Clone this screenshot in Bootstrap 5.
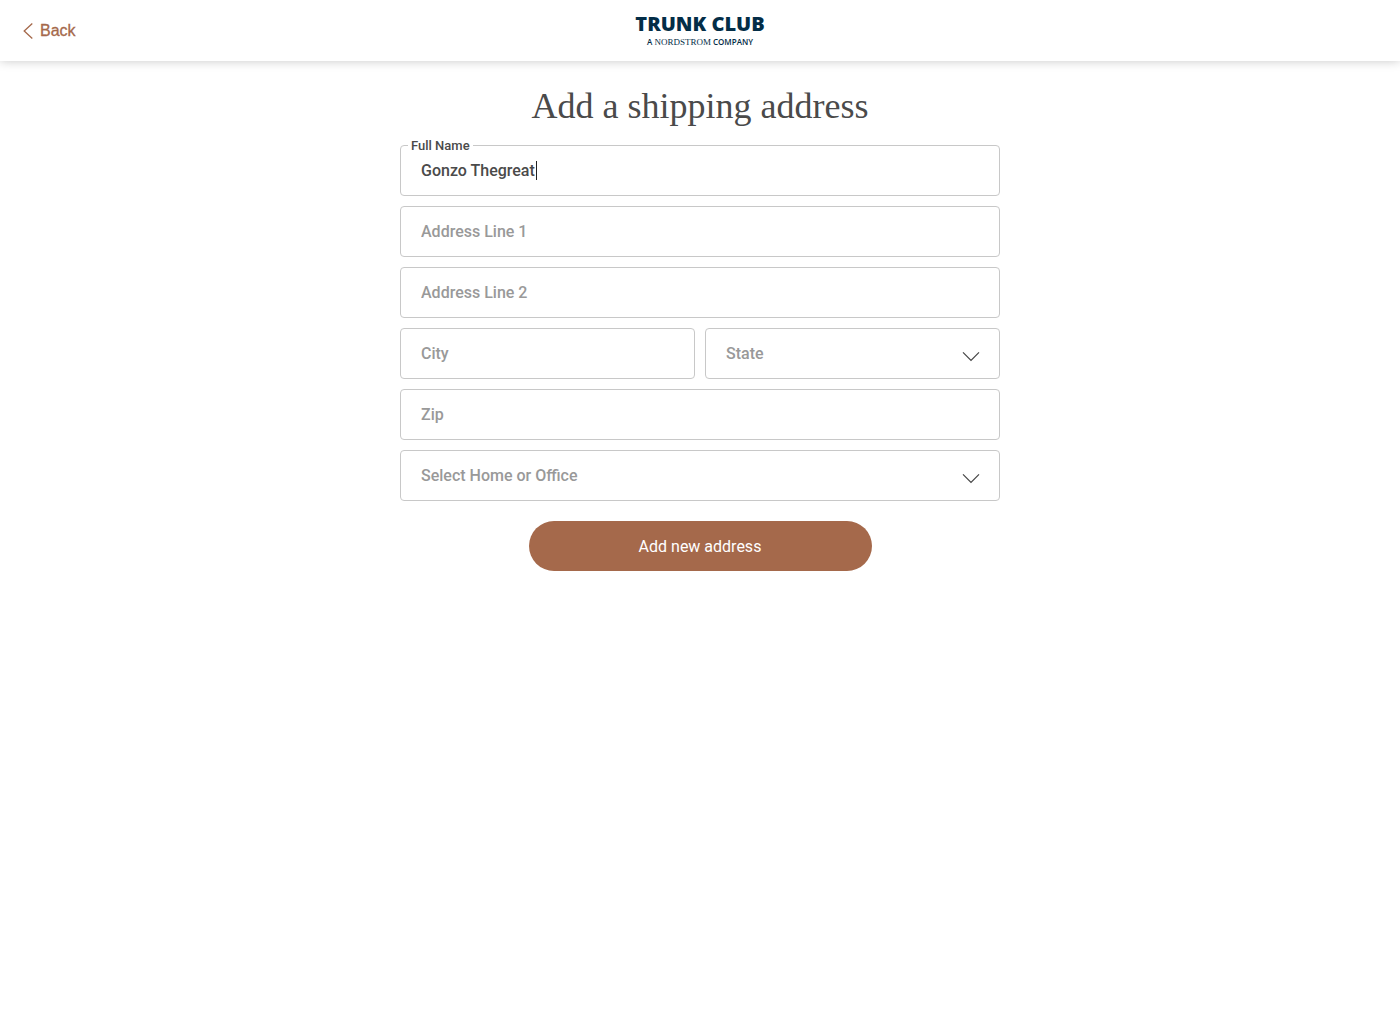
<!DOCTYPE html>
<html lang="en">
<head>
<meta charset="utf-8">
<meta name="viewport" content="width=device-width, initial-scale=1">
<title>Add a shipping address - Trunk Club</title>
<link rel="stylesheet" href="https://cdn.jsdelivr.net/npm/bootstrap@5.3.0/dist/css/bootstrap.min.css">
<style>
  body { font-family: Roboto, "Liberation Sans", sans-serif; color: #4a4a4a; background: #fff; }
  .site-header { height: 61px; box-shadow: 0 0 10px rgba(0, 0, 0, .22); }
  .back-link { color: #a5694b; font: 500 16px/24px "Liberation Sans", sans-serif; -webkit-text-stroke: .3px currentColor; left: 23px; gap: 7px; }
  .brand { color: #032d47; font-family: "Open Sans", sans-serif; }
  .brand-name { font-size: 20px; line-height: 22px; font-weight: 800; }
  .brand-tag { font-size: 8px; line-height: 14px; font-weight: 600; }
  .brand-tag span { font-family: "Liberation Serif", serif; font-weight: 400; font-size: 9px; }
  .page-title { font: 400 36px/44px "Liberation Serif", serif; margin: 23px 0 17px; }
  .address-form { max-width: 600px; }
  .fields { gap: 10px; }
  .field { flex: 1 1 0; min-width: 0; }
  .address-form .form-control, .address-form .form-select {
    height: 51px; padding: 0 20px; border: 1px solid #c8c8c8; border-radius: 4px;
    font-size: 16px; font-weight: 500; color: #4a4a4a; background-color: #fff;
  }
  .address-form .form-control::placeholder { color: #999; opacity: 1; }
  .address-form .form-select { color: #999; background-image: none; }
  .float-label { left: 8px; top: -7px; padding: 0 3px; background: #fff; font-size: 13px; line-height: 16px; font-weight: 500; }
  .text-caret { left: 136px; top: 16px; width: 1px; height: 19px; background: #222; }
  .chevron { right: 20px; top: 23px; pointer-events: none; }
  .submit-btn { width: 343px; max-width: 100%; height: 50px; margin-top: 20px; padding: 8px 12px 6px; font-size: 16px; color: #fff; background: #a5694b; border: 0; }
  .submit-btn:hover { color: #fff; background: #925a3f; }
</style>
</head>
<body>
<header class="site-header position-relative d-flex align-items-center justify-content-center bg-white">
  <a href="#" class="back-link position-absolute d-flex align-items-center text-decoration-none">
    <svg width="10" height="16" viewBox="0 0 10 16" fill="none" stroke="currentColor" stroke-width="1.3" aria-hidden="true"><path d="M9.3 .5 1.2 8 9.3 15.5"/></svg>
    Back
  </a>
  <a href="#" class="brand d-flex flex-column align-items-center text-decoration-none">
    <span class="brand-name">TRUNK CLUB</span>
    <span class="brand-tag">A <span>NORDSTROM</span> COMPANY</span>
  </a>
</header>
<main class="container-fluid">
  <h1 class="page-title text-center">Add a shipping address</h1>
  <form class="address-form mx-auto">
    <div class="fields d-flex flex-column">
      <div class="position-relative">
        <input class="form-control" id="name" type="text" value="Gonzo Thegreat">
        <label class="float-label position-absolute" for="name">Full Name</label>
        <span class="text-caret position-absolute" aria-hidden="true"></span>
      </div>
      <input class="form-control" type="text" placeholder="Address Line 1" aria-label="Address Line 1">
      <input class="form-control" type="text" placeholder="Address Line 2" aria-label="Address Line 2">
      <div class="fields d-flex">
        <div class="field">
          <input class="form-control" type="text" placeholder="City" aria-label="City">
        </div>
        <div class="field position-relative">
          <select class="form-select" aria-label="State"><option>State</option></select>
          <svg class="chevron position-absolute" width="18" height="11" viewBox="0 0 18 11" fill="none" stroke="#444" stroke-width="1.2" aria-hidden="true"><path d="M1 1.3 9 9.3 17 1.3"/></svg>
        </div>
      </div>
      <input class="form-control" type="text" placeholder="Zip" aria-label="Zip">
      <div class="position-relative">
        <select class="form-select" aria-label="Select Home or Office"><option>Select Home or Office</option></select>
        <svg class="chevron position-absolute" width="18" height="11" viewBox="0 0 18 11" fill="none" stroke="#444" stroke-width="1.2" aria-hidden="true"><path d="M1 1.3 9 9.3 17 1.3"/></svg>
      </div>
    </div>
    <div class="text-center">
      <button type="submit" class="submit-btn btn rounded-pill">Add new address</button>
    </div>
  </form>
</main>
<script src="https://cdn.jsdelivr.net/npm/bootstrap@5.3.0/dist/js/bootstrap.bundle.min.js"></script>
</body>
</html>
